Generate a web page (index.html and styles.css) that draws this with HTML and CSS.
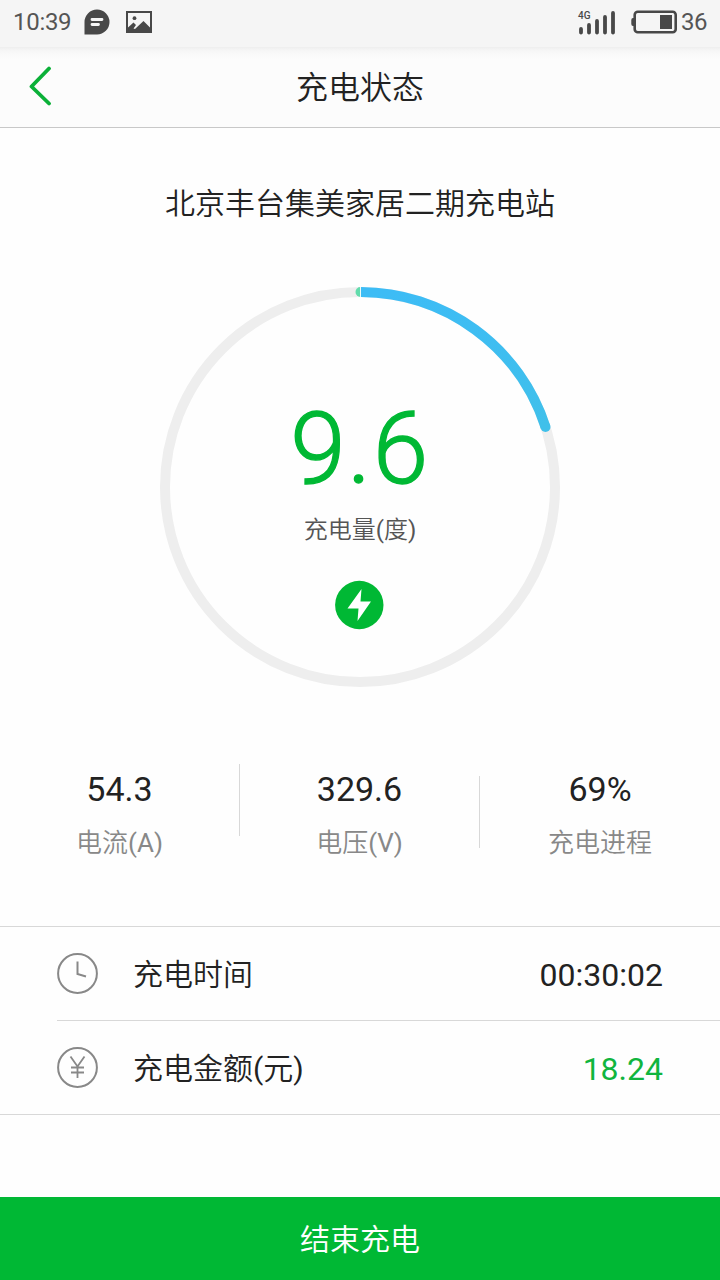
FILE: index.html
```html
<!DOCTYPE html>
<html lang="zh-CN">
<head>
<meta charset="utf-8">
<title>充电状态</title>
<link rel="stylesheet" href="styles.css">
</head>
<body>
<div class="statusbar">
  <span class="clock">10:39</span>
  <svg class="chat" width="26" height="26" viewBox="0 0 26 26"><path d="M13 0.500a12.500 12.500 0 0 1 0 25H0.500V13A12.500 12.500 0 0 1 13 .5z" fill="#484848"/><path d="M8 10.500h10M8 15.500h6.500" stroke="#f5f5f5" stroke-width="2.800" stroke-linecap="round"/></svg>
  <svg class="photo" width="26" height="22" viewBox="0 0 26 22"><path fill="#484848" fill-rule="evenodd" d="M0 0h26v22H0zM2 2v14.500l5.500-5 2.500 2.500-2.500 3.500 1.500 .5 8.500-8 6.500 6.500V2z"/><circle cx="8.500" cy="7.200" r="1.900" fill="#484848"/></svg>
  <span class="grow"></span>
  <svg class="signal" width="40" height="26" viewBox="0 0 40 26"><text class="net" x="1" y="9.500">4G</text><path d="M4 20v3.500M12 16v7.500M20 12v11.500M28 8v15.500M36 4v19.500" stroke="#484848" stroke-width="3.800" stroke-linecap="round"/></svg>
  <svg class="battery" width="47" height="24" viewBox="0 0 47 24"><rect x="4.700" y="1.800" width="41" height="20.500" rx="3" fill="none" stroke="#484848" stroke-width="2.600"/><path d="M4.500 8H3Q1.300 8 1.300 10v4q0 2 1.700 2h1.500zM30 5h12v14H30z" fill="#484848"/></svg>
  <span class="level">36</span>
</div>
<header class="header">
  <svg class="back" width="24" height="40" viewBox="0 0 24 40"><path d="M21 2.500L3.500 20.500 21 37.500" fill="none" stroke="#0bb038" stroke-width="3.800" stroke-linecap="round" stroke-linejoin="round"/></svg>
  <h1 class="title">充电状态</h1>
</header>
<main class="main">
  <h2 class="station">北京丰台集美家居二期充电站</h2>
  <div class="gauge">
    <svg class="ring" width="400" height="400" viewBox="0 0 400 400">
      <defs><linearGradient id="arc" x1="0" y1="0" x2="0" y2="1"><stop offset="0" stop-color="#3dbcf5"/><stop offset="1" stop-color="#40c0ea"/></linearGradient></defs>
      <circle cx="200" cy="200" r="195" fill="none" stroke="#eee" stroke-width="10"/>
      <path d="M200.500 0V10A5 5 0 0 1 200.500 0z" fill="#62dcac"/>
      <path d="M201 5A195 195 0 0 1 385.500 140" fill="none" stroke="url(#arc)" stroke-width="10"/>
      <circle cx="385.500" cy="140" r="5" fill="#40c0ea"/>
      <path d="M200.500 0V10" stroke="#fff" stroke-width=".8"/>
    </svg>
    <div class="reading">
      <div class="energy">9.6</div>
      <div class="unit">充电量<span class="latin">(</span>度<span class="latin">)</span></div>
      <svg class="bolt" width="50" height="50" viewBox="0 0 50 50"><circle cx="24.300" cy="25" r="24.200" fill="#00b834"/><path d="M26.500 9L12.500 28.500H23.500L22.500 41 36 21.500H25.500z" fill="#fff"/></svg>
    </div>
  </div>
  <section class="stats">
    <div class="stat"><b class="value">54.3</b><span class="label">电流<span class="latin">(A)</span></span></div>
    <i class="divider"></i>
    <div class="stat"><b class="value">329.6</b><span class="label">电压<span class="latin">(V)</span></span></div>
    <i class="divider low"></i>
    <div class="stat"><b class="value">69%</b><span class="label">充电进程</span></div>
  </section>
  <section class="list">
    <div class="row">
      <svg class="icon" width="42" height="42" viewBox="0 0 42 42" fill="none" stroke="#888"><circle cx="20.500" cy="20.500" r="19.400" stroke-width="2"/><path d="M20.500 8.500V21l8.500 2.500" stroke-width="2"/></svg>
      <span class="name">充电时间</span><span class="amount">00:30:02</span>
    </div>
    <div class="row">
      <svg class="icon" width="42" height="42" viewBox="0 0 42 42" fill="none" stroke="#888"><circle cx="20.500" cy="20.500" r="19.400" stroke-width="2"/><path d="M13.500 9.500l7 10 7-10M20.500 19.500V31M14 20.500h13M14 25.500h13" stroke-width="1.800"/></svg>
      <span class="name">充电金额<span class="latin">(</span>元<span class="latin">)</span></span><span class="amount green">18.24</span>
    </div>
  </section>
</main>
<button class="stop">结束充电</button>
</body>
</html>
```
FILE: styles.css
```css
* { box-sizing: border-box; }
body {
  margin: 0;
  width: 720px;
  height: 1280px;
  display: flex;
  flex-direction: column;
  overflow: hidden;
  background: #fefefe;
  color: #222;
  font-family: Roboto, "Noto Sans CJK SC", sans-serif;
  font-weight: 350;
}
svg { display: block; flex: none; }
.latin { font-weight: 400; }
.statusbar {
  flex: none;
  height: 47px;
  display: flex;
  align-items: center;
  padding: 0 12px 3px 13px;
  background: #f5f5f5;
  color: #555;
  font-size: 24px;
  font-weight: 400;
}
.clock { width: 58px; margin-right: 13px; letter-spacing: -0.3px; }
.photo { margin-left: 16px; }
.grow { flex: 1; }
.net { font: 500 10px Roboto, sans-serif; fill: #484848; }
.signal { margin-right: 13px; }
.level { width: 27px; margin-left: 4px; letter-spacing: -0.5px; }
.header {
  flex: none;
  height: 81px;
  display: grid;
  grid-template-columns: 60px 1fr 60px;
  align-items: center;
  padding: 0 28px 3px 28px;
  background: linear-gradient(#eee, #f7f7f7 4px, #fcfcfc 12px);
  border-bottom: 1px solid #c8c8c8;
}
.title { margin: 0; padding-top: 4px; text-align: center; font-size: 32px; line-height: 48px; font-weight: 350; }
.main { flex: 1; }
.station { margin: 53px 0 61px; text-align: center; font-size: 30px; line-height: 45px; font-weight: 350; }
.gauge { display: grid; justify-content: center; }
.ring, .reading { grid-area: 1 / 1; }
.reading { display: flex; flex-direction: column; align-items: center; padding-top: 106px; }
.energy {
  color: #00b834;
  font-size: 100px;
  line-height: 112px;
  letter-spacing: 1.5px;
  font-weight: 300;
  -webkit-text-stroke: 1.3px #00b834;
}
.unit { margin-top: 7px; font-size: 24px; line-height: 36px; color: #555; }
.bolt { margin-top: 32px; }
.stats { display: grid; grid-template-columns: 239px 1px 239px 1px 240px; align-items: start; height: 239px; padding-top: 77px; }
.stat { display: flex; flex-direction: column; align-items: center; }
.value { margin-top: 4px; font-size: 34px; line-height: 42px; font-weight: 400; }
.label { margin-top: 14px; font-size: 26px; line-height: 39px; color: #888; }
.divider { height: 72px; background: #d8d8d8; }
.low { margin-top: 12px; }
.list { border-top: 1px solid #d8d8d8; border-bottom: 1px solid #d8d8d8; }
.row { display: flex; align-items: center; height: 93px; margin-left: 57px; padding-right: 57px; }
.row + .row { height: 94px; border-top: 1px solid #d8d8d8; }
.name { margin-left: 34px; padding-bottom: 3px; font-size: 30px; }
.amount { margin-left: auto; padding-top: 3px; font-size: 32px; font-weight: 400; }
.green { color: #10b53e; }
.stop {
  flex: none;
  height: 83px;
  padding: 0 0 3px;
  border: 0;
  background: #00b834;
  color: #fff;
  font: 350 30px Roboto, "Noto Sans CJK SC", sans-serif;
}
```
